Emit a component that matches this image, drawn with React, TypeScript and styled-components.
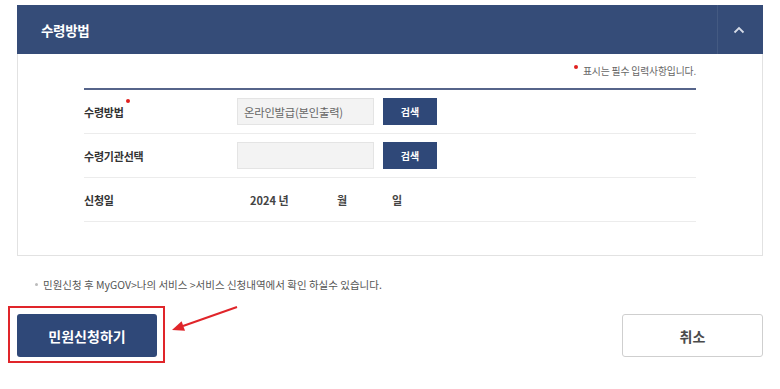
import React from "react";
import styled, { createGlobalStyle } from "styled-components";

const GlobalStyle = createGlobalStyle`
  html, body { margin: 0; padding: 0; background: #ffffff; }
  body { font-family: "Noto Sans CJK KR", "Noto Sans", sans-serif; color: #333; }
  * { box-sizing: border-box; }
`;

const Page = styled.div`
  width: 780px;
  padding: 5px 17px 0 17px;
`;

const Panel = styled.section`
  display: flex;
  flex-direction: column;
`;

const PanelHeader = styled.header`
  display: flex;
  align-items: stretch;
  height: 49px;
  background: #354c78;
`;

const PanelTitle = styled.h2`
  flex: 1;
  margin: 0;
  padding-left: 24px;
  display: flex;
  align-items: center;
  color: #ffffff;
  font-size: 13.5px;
  font-weight: 700;
  letter-spacing: -0.3px;
`;

const ToggleButton = styled.button`
  width: 46px;
  border: none;
  border-left: 1px solid rgba(255, 255, 255, 0.08);
  background: transparent;
  display: flex;
  align-items: center;
  justify-content: center;
  padding: 0 3px 0 0;
  cursor: pointer;
`;

const PanelBody = styled.div`
  border: 1px solid #e2e2e2;
  border-top: none;
  padding: 0 66px 33px 66px;
`;

const RequiredNote = styled.p`
  margin: 0;
  height: 34px;
  display: flex;
  align-items: center;
  justify-content: flex-end;
  font-size: 9.8px;
  color: #666;
  letter-spacing: -0.15px;
`;

const RedDot = styled.span`
  display: inline-block;
  width: 4px;
  height: 4px;
  border-radius: 50%;
  background: #e0201e;
  margin-right: 5px;
  transform: translateY(-4px);
`;

const FormTable = styled.div`
  border-top: 2px solid #56648a;
`;

const FormRow = styled.div`
  display: grid;
  grid-template-columns: 153px 1fr;
  align-items: center;
  height: 44px;
  border-bottom: 1px solid #ececec;
`;

const Label = styled.div`
  font-size: 11px;
  font-weight: 700;
  color: #333;
  display: flex;
  align-items: flex-start;
  letter-spacing: -0.2px;
`;

const LabelDot = styled.span`
  display: inline-block;
  width: 4px;
  height: 4px;
  border-radius: 50%;
  background: #e0201e;
  margin-left: 2px;
  transform: translateY(-5px);
`;

const FieldGroup = styled.div`
  display: flex;
  align-items: center;
  gap: 9px;
`;

const TextBox = styled.div`
  width: 137px;
  height: 27px;
  background: #f3f3f3;
  border: 1px solid #e4e4e4;
  display: flex;
  align-items: center;
  padding-left: 6px;
  font-size: 11.3px;
  color: #666;
  letter-spacing: -0.2px;
`;

const SearchButton = styled.button`
  width: 54px;
  height: 27px;
  border: none;
  background: #2f4878;
  color: #ffffff;
  font-family: inherit;
  font-size: 10px;
  font-weight: 700;
  padding: 0;
`;

const DateGroup = styled.div`
  display: flex;
  align-items: center;
  padding-left: 13px;
  font-size: 11px;
  font-weight: 700;
  color: #444;
`;

const DatePart = styled.span<{ $width: number }>`
  width: ${(p) => p.$width}px;
`;

const FootNote = styled.p`
  margin: 21px 0 0 0;
  padding-left: 18px;
  display: flex;
  align-items: center;
  gap: 5px;
  height: 14px;
  font-size: 10.5px;
  color: #555;
  letter-spacing: 0;
`;

const Bullet = styled.span`
  width: 3px;
  height: 3px;
  background: #bbb;
  border-radius: 50%;
`;

const Actions = styled.div`
  margin-top: 15px;
  display: flex;
  justify-content: space-between;
  align-items: flex-start;
`;

const Highlight = styled.div`
  position: relative;
  margin-left: -9px;
  border: 2px solid #e0252a;
  padding: 6px 6px 4px 7px;
`;

const PrimaryButton = styled.button`
  width: 140px;
  height: 43px;
  border: none;
  border-radius: 3px;
  background: #2f4878;
  color: #ffffff;
  font-family: inherit;
  font-size: 14px;
  font-weight: 700;
  padding: 0;
`;

const CancelButton = styled.button`
  margin-top: 8px;
  width: 141px;
  height: 43px;
  border: 1px solid #cfcfcf;
  border-radius: 3px;
  background: #ffffff;
  color: #4a4a4a;
  font-family: inherit;
  font-size: 14px;
  font-weight: 700;
  padding: 0;
`;

const ArrowSvg = styled.svg`
  position: absolute;
  left: 158px;
  top: -4px;
  overflow: visible;
`;

export default function App() {
  return (
    <>
      <GlobalStyle />
      <Page>
        <Panel>
          <PanelHeader>
            <PanelTitle>수령방법</PanelTitle>
            <ToggleButton aria-label="접기">
              <svg width="12" height="8" viewBox="0 0 12 8">
                <path d="M1.5 6.5 L6 2 L10.5 6.5" fill="none" stroke="#d5dbe7" strokeWidth="1.8" />
              </svg>
            </ToggleButton>
          </PanelHeader>
          <PanelBody>
            <RequiredNote>
              <RedDot />
              표시는 필수 입력사항입니다.
            </RequiredNote>
            <FormTable>
              <FormRow>
                <Label>
                  수령방법
                  <LabelDot />
                </Label>
                <FieldGroup>
                  <TextBox>온라인발급(본인출력)</TextBox>
                  <SearchButton>검색</SearchButton>
                </FieldGroup>
              </FormRow>
              <FormRow>
                <Label>수령기관선택</Label>
                <FieldGroup>
                  <TextBox />
                  <SearchButton>검색</SearchButton>
                </FieldGroup>
              </FormRow>
              <FormRow>
                <Label>신청일</Label>
                <DateGroup>
                  <DatePart $width={87}>2024 년</DatePart>
                  <DatePart $width={55}>월</DatePart>
                  <DatePart $width={20}>일</DatePart>
                </DateGroup>
              </FormRow>
            </FormTable>
          </PanelBody>
        </Panel>
        <FootNote>
          <Bullet />
          민원신청 후 MyGOV&gt;나의 서비스 &gt;서비스 신청내역에서 확인 하실수 있습니다.
        </FootNote>
        <Actions>
          <Highlight>
            <PrimaryButton>민원신청하기</PrimaryButton>
            <ArrowSvg width="84" height="30" viewBox="0 0 84 30">
              <line x1="69" y1="3" x2="15" y2="22" stroke="#e0252a" strokeWidth="2" />
              <polygon points="4,26 17,26.7 13.6,17.3" fill="#e0252a" />
            </ArrowSvg>
          </Highlight>
          <CancelButton>취소</CancelButton>
        </Actions>
      </Page>
    </>
  );
}
